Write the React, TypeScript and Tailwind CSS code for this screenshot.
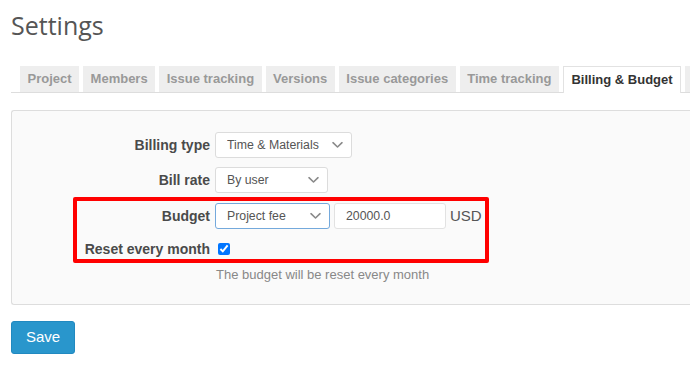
import React, { useState } from 'react';

const tabs = [
  'Project',
  'Members',
  'Issue tracking',
  'Versions',
  'Issue categories',
  'Time tracking',
  'Billing & Budget',
];

function Chevron() {
  return (
    <svg
      className="pointer-events-none absolute right-[9px] top-1/2 -translate-y-1/2"
      width="11"
      height="7"
      viewBox="0 0 11 7"
      fill="none"
    >
      <path d="M1 1.2l4.5 4.3L10 1.2" stroke="#8a8a8a" strokeWidth="1.6" strokeLinecap="round" strokeLinejoin="round" />
    </svg>
  );
}

function Select({
  options,
  width,
  focused = false,
}: {
  options: string[];
  width: string;
  focused?: boolean;
}) {
  return (
    <div className={`relative h-[26px] ${width}`}>
      <select
        defaultValue={options[0]}
        className={`h-full w-full appearance-none rounded-[3px] border bg-white pl-[11px] pr-6 text-[12.3px] text-[#555] outline-none ${
          focused ? 'border-[#74a9dc]' : 'border-[#dcdcdc]'
        }`}
      >
        {options.map((o) => (
          <option key={o}>{o}</option>
        ))}
      </select>
      <Chevron />
    </div>
  );
}

function Label({ children }: { children: React.ReactNode }) {
  return (
    <div className="w-[198px] shrink-0 text-right text-[14px] font-bold text-[#4a4a4a]">{children}</div>
  );
}

export default function App() {
  const [reset, setReset] = useState(true);

  return (
    <div className="relative h-[372px] w-[690px] overflow-hidden bg-white font-['Liberation_Sans',Arial,sans-serif]">
      {/* Title */}
      <h2 className="pl-[11px] pt-[8px] font-['Open_Sans',sans-serif] text-[25px] leading-[34px] font-normal text-[#555]">
        Settings
      </h2>

      {/* Tabs */}
      <div className="ml-[11px] mt-[25px] flex h-[26px] items-end gap-[4px] whitespace-nowrap border-b border-[#dddddd] pl-[9px]">
        {tabs.map((t) => {
          const active = t === 'Billing & Budget';
          return (
            <div
              key={t}
              className={`flex shrink-0 items-center px-[7.5px] text-[13px] font-bold ${
                active
                  ? 'relative -mb-px h-[27px] border border-b-0 border-[#e2e2e2] bg-white px-[6.5px] text-[#333]'
                  : 'h-[26px] bg-[#eeeeee] text-[#999]'
              }`}
            >
              {t}
            </div>
          );
        })}
        {/* next tab, cut off by the window edge */}
        <div className="h-[26px] w-[30px] shrink-0 bg-[#eeeeee]" />
      </div>

      {/* Panel */}
      <div className="ml-[11px] mt-[17px] rounded-l-[3px] border border-r-0 border-[#dddddd] bg-[#fafafa] pb-[20px] pt-[21px]">
        <div className="flex items-center gap-[5px]">
          <Label>Billing type</Label>
          <Select options={['Time & Materials', 'Fixed price', 'Non-billable']} width="w-[137px]" />
        </div>
        <div className="mt-[9px] flex items-center gap-[5px]">
          <Label>Bill rate</Label>
          <Select options={['By user', 'By role', 'Fixed']} width="w-[113px]" />
        </div>
        <div className="mt-[10px] flex items-center gap-[5px]">
          <Label>Budget</Label>
          <Select options={['Project fee', 'Hours', 'None']} width="w-[115px]" focused />
          <input
            defaultValue="20000.0"
            className="ml-[-1px] h-[26px] w-[112px] rounded-[3px] border border-[#e2e2e2] bg-white pl-[11px] text-[12.3px] text-[#555] outline-none"
          />
          <span className="ml-[-1px] text-[15px] text-[#555]">USD</span>
        </div>
        <div className="mt-[9px] flex h-[22px] items-center gap-[5px]">
          <Label>Reset every month</Label>
          <input
            type="checkbox"
            checked={reset}
            onChange={(e) => setReset(e.target.checked)}
            className="ml-[3px] h-[12px] w-[12px] accent-[#0075ff]"
          />
        </div>
        <div className="mt-[6px] pl-[204px] text-[13px] leading-[18px] text-[#888]">
          The budget will be reset every month
        </div>
      </div>

      {/* Save */}
      <button className="ml-[11px] mt-[16px] h-[33px] w-[64px] rounded-[3px] border border-[#2189c0] bg-[#2996cc] text-[15px] text-white">
        Save
      </button>

      {/* Highlight annotation */}
      <div className="pointer-events-none absolute left-[73px] top-[197px] h-[66px] w-[416px] rounded-[2px] border-[4px] border-[#ff0000]" />
    </div>
  );
}
